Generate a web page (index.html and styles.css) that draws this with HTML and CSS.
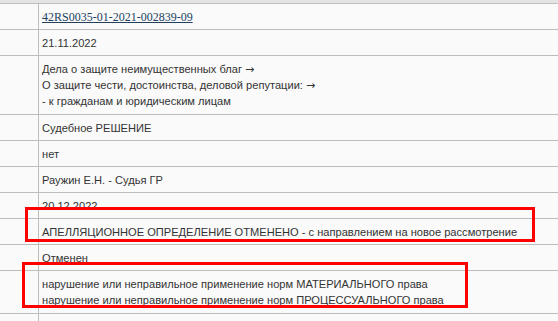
FILE: index.html
```html
<!DOCTYPE html>
<html lang="ru">
<head>
<meta charset="utf-8">
<link rel="stylesheet" href="styles.css">
</head>
<body>
<div class="page">
  <div class="topband"></div>
  <div class="table">
    <div class="row"><div class="label"></div><div class="cell"><a class="link" href="#">42RS0035-01-2021-002839-09</a></div></div>
    <div class="row"><div class="label"></div><div class="cell">21.11.2022</div></div>
    <div class="row"><div class="label"></div><div class="cell multi">Дела о защите неимущественных благ <span class="arrow">→</span><br>О защите чести, достоинства, деловой репутации: <span class="arrow">→</span><br>- к гражданам и юридическим лицам</div></div>
    <div class="row"><div class="label"></div><div class="cell">Судебное РЕШЕНИЕ</div></div>
    <div class="row"><div class="label"></div><div class="cell">нет</div></div>
    <div class="row"><div class="label"></div><div class="cell">Раужин Е.Н. - Судья ГР</div></div>
    <div class="row"><div class="label"></div><div class="cell">20.12.2022</div></div>
    <div class="row"><div class="label"></div><div class="cell">АПЕЛЛЯЦИОННОЕ ОПРЕДЕЛЕНИЕ ОТМЕНЕНО - с направлением на новое рассмотрение</div></div>
    <div class="row"><div class="label"></div><div class="cell">Отменен</div></div>
    <div class="row"><div class="label"></div><div class="cell multi">нарушение или неправильное применение норм МАТЕРИАЛЬНОГО права<br>нарушение или неправильное применение норм ПРОЦЕССУАЛЬНОГО права</div></div>
    <div class="row"><div class="label"></div><div class="cell">&nbsp;</div></div>
  </div>
  <div class="mark mark-one"></div>
  <div class="mark mark-two"></div>
</div>
</body>
</html>
```
FILE: styles.css
```css
html, body {
  margin: 0;
  padding: 0;
  background: #fafafa;
}
.page {
  position: relative;
  width: 558px;
  height: 321px;
  overflow: hidden;
  font-family: "Liberation Sans", Arial, sans-serif;
  font-size: 11.1px;
  color: #333;
}
.topband {
  height: 3px;
  background: #e4e4e4;
  border-bottom: 1px solid #bdbdbd;
}
.row {
  display: grid;
  grid-template-columns: 39px 1fr;
  border-bottom: 1px solid #bdbdbd;
}
.label {
  border-right: 1px solid #bdbdbd;
}
.cell {
  padding: 5px 4px 4px 3px;
  line-height: 16px;
  height: 16px;
  white-space: nowrap;
}
.cell.multi {
  height: auto;
  padding-bottom: 5px;
}
.arrow {
  font-family: "DejaVu Sans", sans-serif;
  font-size: 11px;
  line-height: 0;
  color: #333;
}
.link {
  font-family: "Liberation Serif", "Times New Roman", serif;
  font-size: 12px;
  color: #22405e;
  text-decoration: underline;
}
.mark {
  position: absolute;
  border: 3px solid #ff0000;
  box-sizing: border-box;
}
.mark-one {
  left: 25px;
  top: 207px;
  width: 510px;
  height: 35px;
}
.mark-two {
  left: 22px;
  top: 262px;
  width: 446px;
  height: 46px;
}
```
